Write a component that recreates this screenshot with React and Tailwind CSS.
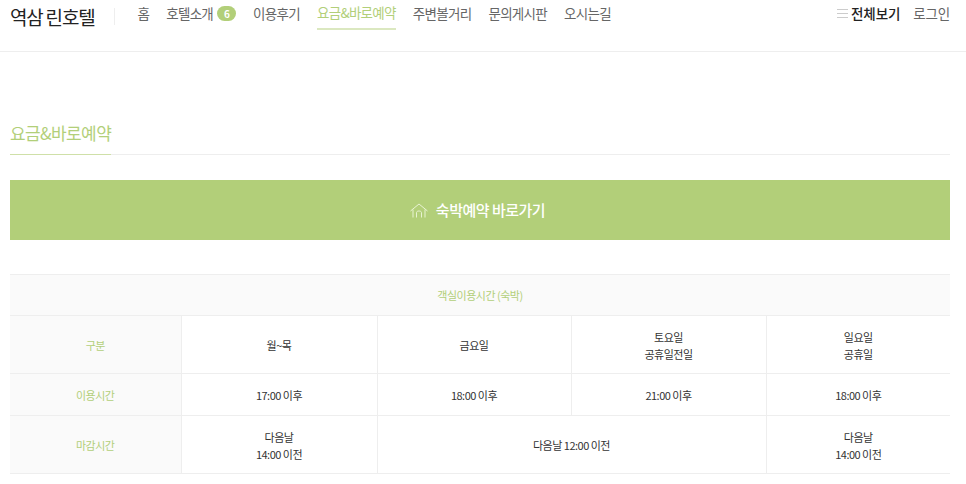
import React from 'react'

const font = "font-['Noto_Sans_CJK_KR','Noto_Sans',sans-serif]"

const menus = [
    { name: '홈' },
    { name: '호텔소개', badge: '6' },
    { name: '이용후기' },
    { name: '요금&바로예약', active: true },
    { name: '주변볼거리' },
    { name: '문의게시판' },
    { name: '오시는길' },
]

const HomeIcon = () => (
    <svg width="18" height="15" viewBox="0 0 18 15" fill="none" stroke="#e8f3d2" strokeWidth="1">
        <path d="M0.5 8 L9 1 L17.5 8" />
        <path d="M3 6.5 V14.5 M15 6.5 V14.5" />
        <path d="M6.5 14.5 V9.5 C6.5 7.5 11.5 7.5 11.5 9.5 V14.5" />
    </svg>
)

const Header = () => {
    return (
        <header className='h-[52px] border-b border-[#eeeeee] flex justify-between pl-[10px] pr-[16px]'>
            <div className='flex items-start'>
                <h1 className='text-[19px] leading-[34px] text-[#222] tracking-[-1.2px] pr-[20px] whitespace-nowrap'>역삼 린호텔</h1>
                <div className='w-px h-[17px] mt-[8px] bg-[#eeeeee]'></div>
                <nav className='flex ml-[22px] gap-[17px] text-[13.5px] text-[#666] tracking-[-0.7px]'>
                    {menus.map((menu) => (
                        <a
                            key={menu.name}
                            className={menu.active
                                ? 'flex h-[30px] items-center pb-[4px] whitespace-nowrap border-b-2 border-[#dbe8c0] text-[#b2cf79]'
                                : 'flex h-[30px] items-center pb-[4px] whitespace-nowrap'}
                        >
                            {menu.name}
                            {menu.badge && (
                                <span className='ml-[4px] w-[19px] h-[15px] rounded-full bg-[#b2cf79] text-white text-[10px] font-bold leading-[15px] text-center'>{menu.badge}</span>
                            )}
                        </a>
                    ))}
                </nav>
            </div>
            <div className='flex h-[30px] items-center pb-[4px] text-[13.5px] whitespace-nowrap'>
                <span className='w-[11px] h-[9px] mr-[3px] border-y border-[#cccccc] flex items-center'>
                    <span className='w-full h-px bg-[#cccccc]'></span>
                </span>
                <a className='text-[#222] font-medium tracking-[-0.1px]'>전체보기</a>
                <a className='text-[#666] ml-[13px] tracking-[-0.2px]'>로그인</a>
            </div>
        </header>
    )
}

const th = 'bg-[#fafafa] text-[#b2cf79] font-normal border-y border-[#eeeeee]'
const thBody = `${th} pt-[2px]`
const td = 'border border-[#eeeeee] border-r-0 last:border-r-0 text-[#333] pt-[2px]'

const App = () => {
    return (
        <div className={`${font} bg-white w-[966px] h-[484px] overflow-hidden`}>
            <Header />

            <main className='pl-[10px] pr-[16px]'>
                <div className='flex mt-[70px] h-[33px] border-b border-[#eeeeee]'>
                    <h2 className='h-[33px] border-b border-[#cfe0a8] text-[17px] leading-[21px] tracking-[-0.6px] text-[#b2cf79]'>요금&바로예약</h2>
                </div>

                <a className='mt-[25px] h-[60px] pr-[5px] bg-[#b2cf79] flex items-center justify-center gap-[8px] text-white text-[15px] font-medium tracking-[-0.5px]'>
                    <HomeIcon />
                    숙박예약 바로가기
                </a>

                <table className='mt-[34px] w-[940px] table-fixed border-collapse text-[11px] tracking-[-0.5px] text-center leading-[17px]'>
                    <colgroup>
                        <col className='w-[171px]' />
                        <col className='w-[196px]' />
                        <col className='w-[194px]' />
                        <col className='w-[195px]' />
                        <col className='w-[184px]' />
                    </colgroup>
                    <tbody>
                        <tr className='h-[41px]'>
                            <th colSpan={5} className={th}>객실이용시간 (숙박)</th>
                        </tr>
                        <tr className='h-[58px]'>
                            <th className={thBody}>구분</th>
                            <td className={td}>월~목</td>
                            <td className={td}>금요일</td>
                            <td className={td}>토요일<br />공휴일전일</td>
                            <td className={td}>일요일<br />공휴일</td>
                        </tr>
                        <tr className='h-[42px]'>
                            <th className={thBody}>이용시간</th>
                            <td className={td}>17:00 이후</td>
                            <td className={td}>18:00 이후</td>
                            <td className={td}>21:00 이후</td>
                            <td className={td}>18:00 이후</td>
                        </tr>
                        <tr className='h-[58px]'>
                            <th className={thBody}>마감시간</th>
                            <td className={td}>다음날<br />14:00 이전</td>
                            <td colSpan={2} className={td}>다음날 12:00 이전</td>
                            <td className={td}>다음날<br />14:00 이전</td>
                        </tr>
                    </tbody>
                </table>
            </main>
        </div>
    )
}

export default App
